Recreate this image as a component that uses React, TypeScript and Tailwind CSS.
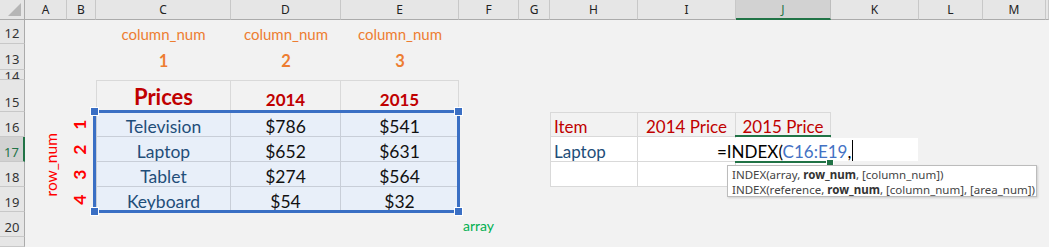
import React from "react";

const COLS = ["", "A", "B", "C", "D", "E", "F", "G", "H", "I", "J", "K", "L", "M", ""];
const ROWS = ["12", "13", "14", "15", "16", "17", "18", "19", "20", "21"];

const cal = { fontFamily: "Lato, 'Open Sans', sans-serif" };
const ui = { fontFamily: "'Noto Sans', 'Open Sans', sans-serif" };

type CellDef = { content?: React.ReactNode; cls?: string };

function cellFor(row: string, col: string): CellDef {
  const dataRows: Record<string, [string, string, string]> = {
    "16": ["Television", "$786", "$541"],
    "17": ["Laptop", "$652", "$631"],
    "18": ["Tablet", "$274", "$564"],
    "19": ["Keyboard", "$54", "$32"],
  };
  if (row === "12" && (col === "C" || col === "D" || col === "E")) {
    return {
      content: <span className="text-[#ed7d31] text-[15px] leading-none">column_num</span>,
      cls: "justify-center items-center pt-[5px]",
    };
  }
  if (row === "13" && (col === "C" || col === "D" || col === "E")) {
    const n = col === "C" ? "1" : col === "D" ? "2" : "3";
    return {
      content: <span className="text-[#ed7d31] text-[16.5px] font-bold leading-none">{n}</span>,
      cls: "justify-center items-end pb-[1px]",
    };
  }
  if (row === "15" && (col === "C" || col === "D" || col === "E")) {
    const border = "border-r border-b border-t border-[#d9d9d9]" + (col === "C" ? " border-l" : "");
    if (col === "C")
      return {
        content: <span className="text-[#c00000] text-[22px] font-bold leading-none">Prices</span>,
        cls: "justify-center items-end pb-[3px] " + border,
      };
    return {
      content: (
        <span className="text-[#c00000] text-[17px] font-bold leading-none">{col === "D" ? "2014" : "2015"}</span>
      ),
      cls: "justify-center items-end pb-[3px] " + border,
    };
  }
  if (dataRows[row] && (col === "C" || col === "D" || col === "E")) {
    const d = dataRows[row];
    const idx = col === "C" ? 0 : col === "D" ? 1 : 2;
    const border = "bg-[#e8eff9] border-r border-b border-[#c8ced8]" + (col === "C" ? " border-l" : "");
    return {
      content: (
        <span className={(idx === 0 ? "text-[#1f4e79]" : "text-[#111]") + " text-[17.5px] leading-none"}>{d[idx]}</span>
      ),
      cls: "justify-center items-end pb-[1px] " + border,
    };
  }
  if ((row === "16" || row === "17" || row === "18") && (col === "H" || col === "I" || col === "J")) {
    const bg = row === "16" ? "bg-[#f2f2f2]" : "bg-white";
    const border = bg + " border-r border-b border-[#d9d9d9]" + (col === "H" ? " border-l" : "") + (row === "16" ? " border-t" : "");
    if (row === "16") {
      const t = col === "H" ? "Item" : col === "I" ? "2014 Price" : "2015 Price";
      return {
        content: <span className="text-[#c00000] text-[17px] leading-none">{t}</span>,
        cls: (col === "H" ? "justify-start pl-[3px] " : "justify-center ") + "items-end pb-[1px] " + border,
      };
    }
    if (row === "17" && col === "H") {
      return {
        content: <span className="text-[#1f4e79] text-[17px] leading-none">Laptop</span>,
        cls: "justify-start pl-[3px] items-end pb-[1px] " + border,
      };
    }
    return { cls: border };
  }
  if (row === "20" && col === "F") {
    return {
      content: <span className="text-[#00b050] text-[14px] leading-none">array</span>,
      cls: "justify-start pl-[4px] items-end pb-[4px]",
    };
  }
  return {};
}

export default function App() {
  const gridCls =
    "grid grid-cols-[25px_42px_29px_135px_110px_118px_60px_31px_88px_98px_95px_88px_64px_63px_1fr] grid-rows-[20px_24px_26px_10px_32px_25px_25px_25px_25px_25px_1fr]";
  return (
    <div className="relative w-[1049px] h-[247px] overflow-hidden bg-[#f2f2f2]" style={cal}>
      <div className={gridCls + " w-full h-full"}>
        {COLS.map((c, i) => {
          if (i === 0)
            return (
              <div key={"h" + i} className="relative bg-[#e6e6e6] border-r border-b border-[#ababab]">
                <div className="absolute right-[3px] bottom-[3px] w-0 h-0 border-l-[13px] border-l-transparent border-b-[13px] border-b-[#b6b6b6]" />
              </div>
            );
          const sel = c === "J";
          return (
            <div
              key={"h" + i}
              className={
                "flex items-center justify-center text-[12px] pt-[1px] " +
                (sel
                  ? "bg-[#d2d2d2] text-[#217346] border-r border-[#bdbdbd] border-b-2 border-b-[#217346]"
                  : "bg-[#e6e6e6] text-[#222] border-r border-[#c8c8c8] border-b border-b-[#ababab]")
              }
              style={ui}
            >
              {c}
            </div>
          );
        })}
        {ROWS.map((r) => (
          <React.Fragment key={r}>
            {COLS.map((c, i) => {
              if (i === 0) {
                const sel = r === "17";
                return (
                  <div
                    key={r + "-" + i}
                    className={
                      "flex justify-center items-end overflow-hidden text-[13px] leading-none " +
                      (r === "14" ? "pb-0 " : r === "13" || r === "12" ? "pb-[3px] " : "pb-[2px] ") +
                      (sel
                        ? "bg-[#d2d2d2] text-[#217346] border-b border-[#c8c8c8] border-r-2 border-r-[#217346]"
                        : "bg-[#e6e6e6] text-[#333] border-b border-[#c8c8c8] border-r border-r-[#ababab]")
                    }
                    style={ui}
                  >
                    {r !== "21" && <span className={r === "14" ? "translate-y-[4px]" : ""}>{r}</span>}
                  </div>
                );
              }
              const def = cellFor(r, c);
              return (
                <div key={r + "-" + i} className={"flex overflow-visible whitespace-nowrap " + (def.cls || "")}>
                  {def.content}
                </div>
              );
            })}
          </React.Fragment>
        ))}
      </div>

      {/* Overlay layer with same grid for things drawn over the cells */}
      <div className={gridCls + " absolute inset-0 pointer-events-none"}>
        {/* row_num label */}
        <div className="col-start-2 row-start-6 row-span-4 flex items-center justify-center">
          <span className="-rotate-90 whitespace-nowrap text-[#ff0000] text-[15.5px] leading-none translate-x-[6px] translate-y-[3px]">
            row_num
          </span>
        </div>
        {["1", "2", "3", "4"].map((n, i) => (
          <div
            key={n}
            className={
              "col-start-3 flex items-center justify-center " +
              (i === 0 ? "row-start-6" : i === 1 ? "row-start-7" : i === 2 ? "row-start-8" : "row-start-9")
            }
          >
            <span className="-rotate-90 text-[#ff0000] text-[17.5px] font-bold leading-none -translate-x-[1px]">{n}</span>
          </div>
        ))}
        {/* selection border around C16:E19 */}
        <div className="col-start-4 col-span-3 row-start-6 row-span-4 relative">
          <div className="absolute -left-[3px] -top-[2px] -right-[1px] -bottom-[1px] border-[3px] border-[#3a6fc4]" />
          <div className="absolute -left-[5px] -top-[4px] w-[7px] h-[7px] bg-[#3a6fc4] outline outline-1 outline-white" />
          <div className="absolute -right-[3px] -top-[4px] w-[7px] h-[7px] bg-[#3a6fc4] outline outline-1 outline-white" />
          <div className="absolute -left-[5px] -bottom-[3px] w-[7px] h-[7px] bg-[#3a6fc4] outline outline-1 outline-white" />
          <div className="absolute -right-[3px] -bottom-[3px] w-[7px] h-[7px] bg-[#3a6fc4] outline outline-1 outline-white" />
        </div>
        {/* active cell J17 border (top & bottom visible while editing) */}
        <div className="col-start-11 row-start-7 relative">
          <div className="absolute -left-[1px] right-0 -top-[2px] h-[2px] bg-[#217346]" />
          <div className="absolute -left-[1px] right-[4px] -bottom-[1px] h-[2px] bg-[#217346]" />
          <div className="absolute -right-[2px] -bottom-[4px] w-[6px] h-[6px] bg-[#217346] outline outline-1 outline-white" />
        </div>
        {/* in-cell editor */}
        <div className="col-start-10 col-span-3 row-start-7 flex items-stretch py-[1px] pr-[1px]">
          <div className="flex-1 bg-white flex items-end justify-start pl-[79px] pb-[1px]">
            <span className="text-[17px] leading-none text-black whitespace-nowrap">
              =INDEX(<span className="text-[#4472c4]">C16:E19</span>,
            </span>
            <span className="w-[1px] h-[21px] bg-black ml-[1px] mb-[-1px]" />
          </div>
        </div>
      </div>

      {/* function tooltip */}
      <div
        className="absolute left-[727px] top-[165px] w-[310px] h-[32px] bg-white border border-[#bcbcbc] shadow-[1px_1px_2px_rgba(0,0,0,0.15)] px-[4px] pt-[1px] text-[11.5px] leading-[15px] text-[#444] whitespace-nowrap"
        style={ui}
      >
        <div>
          INDEX(array, <b className="font-bold text-[#333]">row_num</b>, [column_num])
        </div>
        <div>
          INDEX(reference, <b className="font-bold text-[#333]">row_num</b>, [column_num], [area_num])
        </div>
      </div>
    </div>
  );
}
